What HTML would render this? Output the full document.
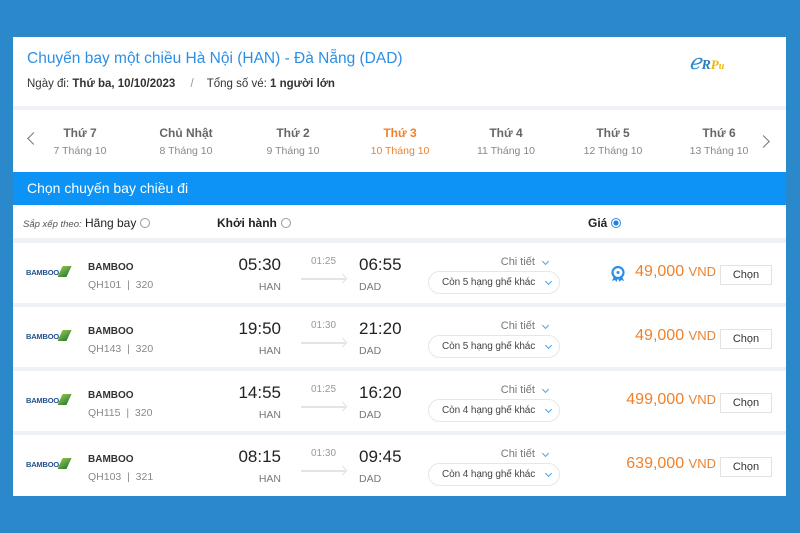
<!DOCTYPE html>
<html><head><meta charset="utf-8"><style>
*{margin:0;padding:0;box-sizing:border-box}
body{width:800px;height:533px;background:#2a88cb;font-family:"Liberation Sans","Noto Sans CJK SC",sans-serif;position:relative;overflow:hidden}
.a{position:absolute;white-space:nowrap}
#card{position:absolute;left:13px;top:37px;width:773px;height:459px;background:#fff}
.sep{position:absolute;left:0;width:773px;background:#eef1f5}
.dt{position:absolute;text-align:center;width:100px;top:89px}
.dt b{display:block;font-size:12px;color:#666;font-weight:bold}
.dt span{display:block;font-size:10.5px;color:#888;margin-top:5px}
.radio{display:inline-block;width:10px;height:10px;border:1px solid #999;border-radius:50%;vertical-align:-1px;margin-left:4px}
.row{position:absolute;left:0;width:773px;height:60px}
.logo{position:absolute;left:13px;top:23px;font-size:7.5px;font-weight:bold;color:#1f4f8f;letter-spacing:-0.2px}
.logo i{display:inline-block;width:9px;height:11px;background:linear-gradient(135deg,#8bc34a,#2e7d32);transform:skewX(-25deg);margin-left:1px;vertical-align:-2px}
.air{position:absolute;left:75px;top:19px;font-size:10px;font-weight:bold;color:#333}
.fl{position:absolute;left:75px;top:36px;font-size:10.5px;color:#888}
.t1{position:absolute;left:198px;width:70px;text-align:right;top:12px;font-size:17px;color:#222}
.c1{position:absolute;left:198px;width:70px;text-align:right;top:38px;font-size:10.5px;color:#777}
.du{position:absolute;left:298px;top:13px;font-size:10px;color:#999}
.ar{position:absolute;left:288px;top:35px;width:44px;height:2px;background:#e4e4e4}
.ar:after{content:"";position:absolute;right:-1px;top:-3px;width:6px;height:6px;border-right:1.5px solid #e0e0e0;border-top:1.5px solid #e0e0e0;transform:rotate(45deg)}
.t2{position:absolute;left:346px;top:12px;font-size:17px;color:#222}
.c2{position:absolute;left:346px;top:38px;font-size:10.5px;color:#777}
.ct{position:absolute;left:470px;width:52px;text-align:right;top:13px;font-size:11px;color:#777}
.cv{position:absolute;width:5px;height:5px;border-right:1.5px solid #4aa3e8;border-bottom:1.5px solid #4aa3e8;transform:rotate(45deg)}
.pill{position:absolute;left:415px;top:28px;width:132px;height:23px;border:1px solid #e6e6e6;border-radius:12px;font-size:10px;color:#444;padding:5px 0 0 13px;letter-spacing:-0.1px}
.pr{position:absolute;right:70px;top:20px;font-size:16px;color:#f0812a}
.pr small{font-size:13px}
.btn{position:absolute;left:707px;top:22px;width:52px;height:20px;border:1px solid #e2e2e2;font-size:11px;color:#333;text-align:center;padding-top:3px}
</style></head><body>
<div id="card">
<div class="a" style="left:14px;top:13px;font-size:15.5px;color:#2d8fe3">Chuyến bay một chiều Hà Nội (HAN) - Đà Nẵng (DAD)</div>
<div class="a" style="left:14px;top:41px;font-size:11.5px;color:#333">Ngày đi: <b>Thứ ba, 10/10/2023</b> <span style="color:#999;margin:0 10px 0 12px">/</span> Tổng số vé: <b>1 người lớn</b></div>
<div class="a" style="left:676px;top:13px;font-size:21px;font-style:italic;color:#2a8bd0;font-family:'Liberation Serif',serif">ℯ<span style="font-size:14px;font-weight:bold;color:#2a7ec0">R</span><span style="font-size:13px;font-weight:bold;color:#f4b400">P</span><span style="font-size:10px;font-weight:bold;color:#f4b400">u</span></div>
<div class="sep" style="top:69px;height:4px"></div>
<div class="a" style="left:16px;top:97px;width:9px;height:9px;border-left:1.5px solid #777;border-bottom:1.5px solid #777;transform:rotate(45deg)"></div>
<div class="dt" style="left:17px"><b>Thứ 7</b><span>7 Tháng 10</span></div>
<div class="dt" style="left:123px"><b>Chủ Nhật</b><span>8 Tháng 10</span></div>
<div class="dt" style="left:230px"><b>Thứ 2</b><span>9 Tháng 10</span></div>
<div class="dt" style="left:337px"><b style="color:#f0812a">Thứ 3</b><span style="color:#f0812a">10 Tháng 10</span></div>
<div class="dt" style="left:443px"><b>Thứ 4</b><span>11 Tháng 10</span></div>
<div class="dt" style="left:550px"><b>Thứ 5</b><span>12 Tháng 10</span></div>
<div class="dt" style="left:656px"><b>Thứ 6</b><span>13 Tháng 10</span></div>
<div class="a" style="left:746px;top:100px;width:9px;height:9px;border-right:1.5px solid #777;border-top:1.5px solid #777;transform:rotate(45deg)"></div>
<div class="a" style="left:0;top:135px;width:773px;height:33px;background:#0c93f5;color:#fff;font-size:14px;padding:8px 0 0 14px">Chọn chuyến bay chiều đi</div>
<div class="a" style="left:10px;top:179px;font-size:12px;color:#222"><i style="font-size:9.5px;color:#555">Sắp xếp theo:</i> <b style="font-weight:normal">Hãng bay</b><span class="radio"></span></div>
<div class="a" style="left:204px;top:179px;font-size:12px;color:#222;font-weight:bold">Khởi hành<span class="radio"></span></div>
<div class="a" style="left:575px;top:179px;font-size:12px;color:#222;font-weight:bold">Giá<span class="radio" style="border-color:#2d8fe3;background:radial-gradient(#1e7fe0 40%,#fff 50%)"></span></div>
<div class="sep" style="top:201px;height:5px"></div>

<div class="row" style="top:206px">
<div class="logo">BAMBOO<i></i></div><div class="air">BAMBOO</div><div class="fl">QH101 &nbsp;|&nbsp; 320</div>
<div class="t1">05:30</div><div class="c1">HAN</div><div class="du">01:25</div><div class="ar"></div><div class="t2">06:55</div><div class="c2">DAD</div>
<div class="ct">Chi tiết</div><div class="cv" style="left:530px;top:16px"></div>
<div class="pill">Còn 5 hạng ghế khác</div><div class="cv" style="left:533px;top:36px"></div>
<svg class="a" style="left:598px;top:23px" width="14" height="16" viewBox="0 0 14 16"><path d="M3 10 L1 15 L4 14 L5.5 16 L7 12 M11 10 L13 15 L10 14 L8.5 16 L7 12" fill="#2d8fe3"/><circle cx="7" cy="6.5" r="5.5" fill="#fff" stroke="#2d8fe3" stroke-width="2.2"/><circle cx="7" cy="6.5" r="1.5" fill="#2d8fe3"/></svg>
<div class="pr">49,000 <small>VND</small></div><div class="btn">Chọn</div></div>
<div class="sep" style="top:266px;height:4px"></div>

<div class="row" style="top:270px">
<div class="logo">BAMBOO<i></i></div><div class="air">BAMBOO</div><div class="fl">QH143 &nbsp;|&nbsp; 320</div>
<div class="t1">19:50</div><div class="c1">HAN</div><div class="du">01:30</div><div class="ar"></div><div class="t2">21:20</div><div class="c2">DAD</div>
<div class="ct">Chi tiết</div><div class="cv" style="left:530px;top:16px"></div>
<div class="pill">Còn 5 hạng ghế khác</div><div class="cv" style="left:533px;top:36px"></div>
<div class="pr">49,000 <small>VND</small></div><div class="btn">Chọn</div></div>
<div class="sep" style="top:330px;height:4px"></div>

<div class="row" style="top:334px">
<div class="logo">BAMBOO<i></i></div><div class="air">BAMBOO</div><div class="fl">QH115 &nbsp;|&nbsp; 320</div>
<div class="t1">14:55</div><div class="c1">HAN</div><div class="du">01:25</div><div class="ar"></div><div class="t2">16:20</div><div class="c2">DAD</div>
<div class="ct">Chi tiết</div><div class="cv" style="left:530px;top:16px"></div>
<div class="pill">Còn 4 hạng ghế khác</div><div class="cv" style="left:533px;top:36px"></div>
<div class="pr">499,000 <small>VND</small></div><div class="btn">Chọn</div></div>
<div class="sep" style="top:394px;height:4px"></div>

<div class="row" style="top:398px">
<div class="logo">BAMBOO<i></i></div><div class="air">BAMBOO</div><div class="fl">QH103 &nbsp;|&nbsp; 321</div>
<div class="t1">08:15</div><div class="c1">HAN</div><div class="du">01:30</div><div class="ar"></div><div class="t2">09:45</div><div class="c2">DAD</div>
<div class="ct">Chi tiết</div><div class="cv" style="left:530px;top:16px"></div>
<div class="pill">Còn 4 hạng ghế khác</div><div class="cv" style="left:533px;top:36px"></div>
<div class="pr">639,000 <small>VND</small></div><div class="btn">Chọn</div></div>
</div>
</body></html>
